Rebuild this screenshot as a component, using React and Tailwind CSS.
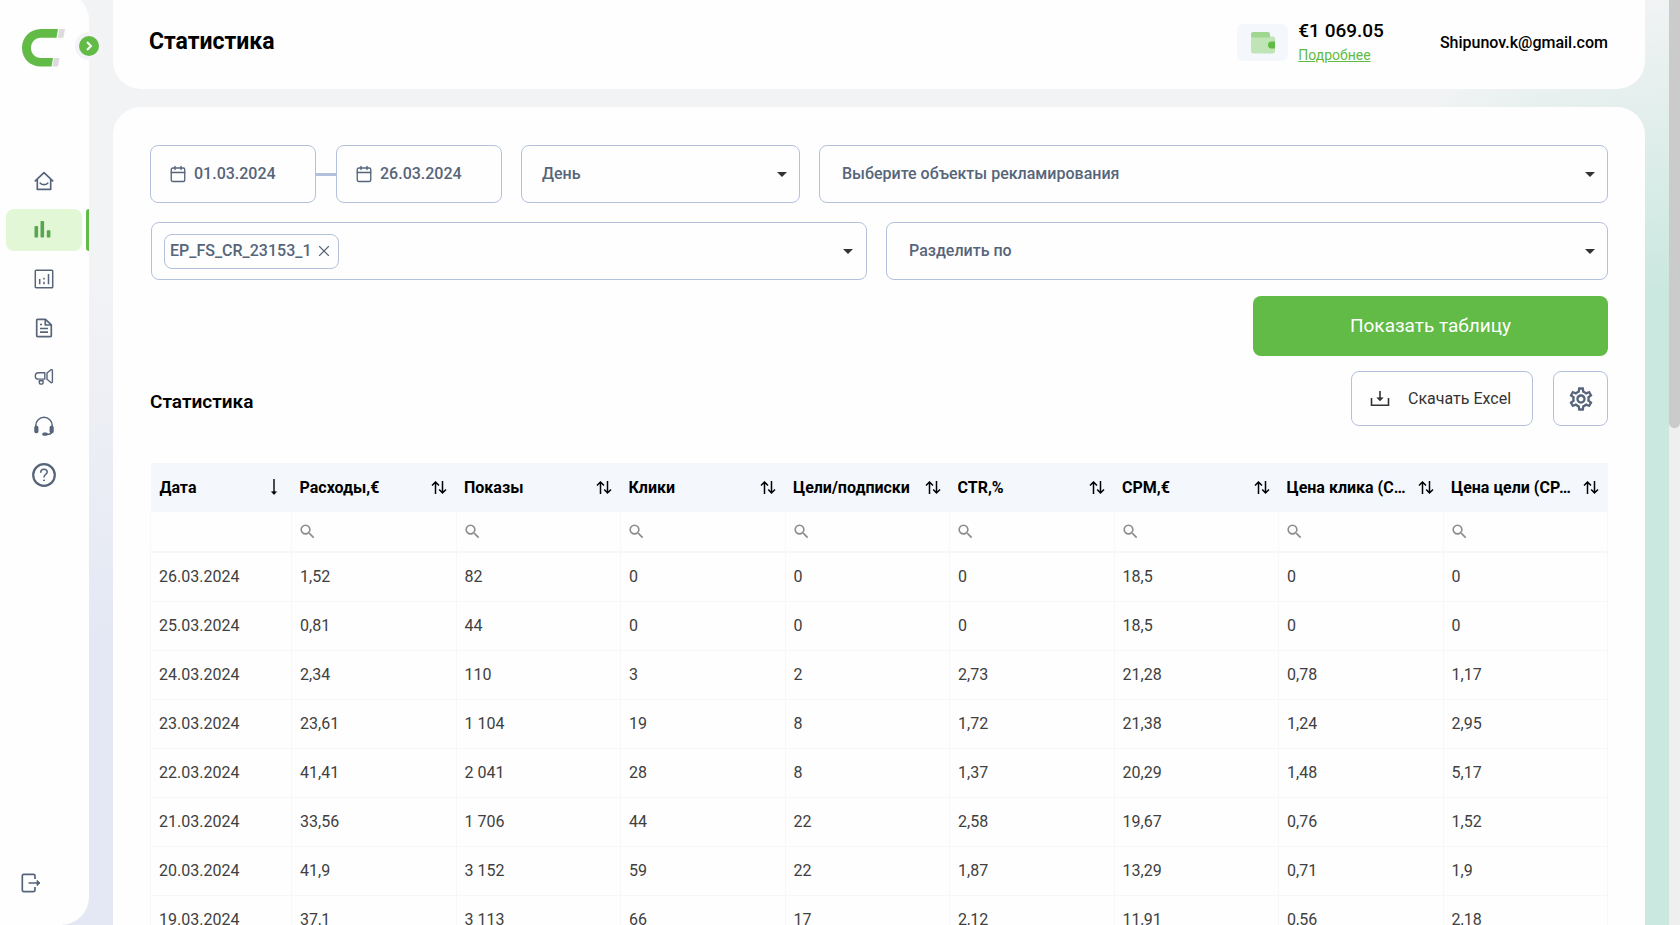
import React, { useState } from "react";
import { Calendar, X } from "lucide-react";
import { MdArrowDropDown, MdOutlineSettings, MdSearch } from "react-icons/md";

const columns = [
  "Расходы,€",
  "Показы",
  "Клики",
  "Цели/подписки",
  "CTR,%",
  "CPM,€",
  "Цена клика (CPC),€",
  "Цена цели (CPA),€",
];

const rows = [
  ["26.03.2024", "1,52", "82", "0", "0", "0", "18,5", "0", "0"],
  ["25.03.2024", "0,81", "44", "0", "0", "0", "18,5", "0", "0"],
  ["24.03.2024", "2,34", "110", "3", "2", "2,73", "21,28", "0,78", "1,17"],
  ["23.03.2024", "23,61", "1 104", "19", "8", "1,72", "21,38", "1,24", "2,95"],
  ["22.03.2024", "41,41", "2 041", "28", "8", "1,37", "20,29", "1,48", "5,17"],
  ["21.03.2024", "33,56", "1 706", "44", "22", "2,58", "19,67", "0,76", "1,52"],
  ["20.03.2024", "41,9", "3 152", "59", "22", "1,87", "13,29", "0,71", "1,9"],
  ["19.03.2024", "37,1", "3 113", "66", "17", "2,12", "11,91", "0,56", "2,18"],
];

const Logo = () => (
  <svg className="h-[38px] w-[44px]" viewBox="0 0 44 38">
    <path
      d="M36 0H19C8 0 0 8.5 0 19s8 18.500 19 18.500h10.500l1.500-8.500H19c-6 0-10-4.500-10-10s4-10.300 10-10.300h15.500z"
      fill="#61bb46"
    />
    <path d="M37.200 0H43l-1.600 8.700h-5.700zM31.800 29h5.700L36 37.500h-5.700z" fill="#dcdcdc" />
  </svg>
);

const HomeIcon = () => (
  <svg className="size-5" viewBox="0 0 20 20" fill="none" stroke="currentColor" strokeWidth="1.700" strokeLinejoin="round" strokeLinecap="round">
    <path d="M1.300 9.800 10 1.600l8.700 8.200M3.300 8.500v9.800h13.400V8.500M6.300 12.200c1.800 2 5.600 2 7.400 0" />
  </svg>
);

const BarsIcon = () => (
  <svg className="h-5 w-5" viewBox="0 0 20 20" fill="#5aa552">
    <rect x="0.500" y="6" width="3.600" height="11.500" rx="0.800" />
    <rect x="6.500" y="1" width="3.600" height="16.500" rx="0.800" />
    <rect x="12.800" y="10.200" width="3.600" height="7.300" rx="0.800" />
  </svg>
);

const ReportIcon = () => (
  <svg className="size-5" viewBox="0 0 20 20" fill="none" stroke="currentColor" strokeWidth="1.500">
    <rect x="1.300" y="1.300" width="17.400" height="17.400" rx="0.800" />
    <path d="M5.700 10V15.300M10 8.700v1.800M10 12.700V15.300M14.500 5v10.300" />
  </svg>
);

const DocumentIcon = () => (
  <svg className="size-5" viewBox="0 0 20 20" fill="none" stroke="currentColor" strokeWidth="1.700" strokeLinejoin="round">
    <path d="M11.500 1.300H3.600c-.5 0-.9.400-.9.900v15.600c0 .5.400.9.900.9h12.800c.5 0 .9-.4.900-.9V6.800z" />
    <path d="M11.300 1.500v5.500h5.700M6 6.500h2M6 10.500h8M6 14.200h8" />
  </svg>
);

const MegaphoneIcon = () => (
  <svg className="size-5" viewBox="0 0 20 20" fill="none" stroke="currentColor" strokeWidth="1.400" strokeLinejoin="round">
    <path d="M4.500 5.700h6.300v6.400H4.500a3.200 3.200 0 0 1 0-6.400zM13 6l3.900-3.200c.6-.4 1.500-.1 1.500.6v11.600c0 .7-.9 1-1.500.5L13 12.200zM5.300 13.800h3.800v1.400c0 1.100-.8 1.900-1.900 1.900s-1.900-.8-1.900-1.900z" />
  </svg>
);

const HeadsetIcon = () => (
  <svg className="size-5" viewBox="0 0 20 20" fill="none" stroke="currentColor" strokeWidth="1.500">
    <path d="M1.800 12V9.500a8.200 8.200 0 0 1 16.400 0V14c0 2.800-1.500 4.200-4 4.200h-2" />
    <rect x="1" y="10.500" width="2.700" height="6" rx="1" fill="currentColor" />
    <rect x="16.300" y="10.500" width="2.700" height="6" rx="1" fill="currentColor" />
    <rect x="9" y="17.300" width="4" height="1.700" rx="0.800" fill="currentColor" />
  </svg>
);

const HelpIcon = () => (
  <svg className="size-6" viewBox="0 0 24 24" fill="none" stroke="currentColor" strokeLinecap="round">
    <circle cx="12" cy="12" r="10.800" strokeWidth="2.200" />
    <path d="M8.800 9.300c0-1.800 1.400-3 3.200-3s3.200 1.100 3.200 2.800c0 2.200-3.200 2.400-3.200 5" strokeWidth="1.500" />
    <circle cx="12" cy="17.300" r="0.500" fill="currentColor" />
  </svg>
);

const LogoutIcon = () => (
  <svg className="size-5" viewBox="0 0 20 20" fill="none" stroke="currentColor" strokeWidth="1.700" strokeLinejoin="round">
    <path d="M14 6V2.700c0-.8-.5-1.300-1.300-1.300H2.600c-.8 0-1.300.5-1.300 1.300v14.600c0 .8.500 1.300 1.300 1.300h10.100c.8 0 1.300-.5 1.300-1.300V14M7.500 10h11" />
    <path d="M16 7.300 19 10l-3 2.700z" fill="currentColor" strokeWidth="0.800" />
  </svg>
);

const WalletIcon = () => (
  <svg className="h-[22px] w-6" viewBox="0 0 24 22">
    <path d="M0 4.500h22a2 2 0 0 1 2 2V19a2.500 2.500 0 0 1-2.500 2.500h-19A2.500 2.500 0 0 1 0 19z" fill="#bfe4b5" />
    <path d="M2 0h15a2 2 0 0 1 2 2v3.500H2A2 2 0 0 1 0 3.500V2a2 2 0 0 1 2-2z" fill="#a0d690" />
    <path d="M20.500 9.500H24v7h-3.500a3.500 3.500 0 0 1 0-7z" fill="#61bb46" />
  </svg>
);

const DownloadIcon = () => (
  <svg className="h-4 w-5" viewBox="0 0 20 16" fill="none" stroke="currentColor" strokeWidth="1.600">
    <path d="M1.500 7v7.200h17V7M10 0v8" />
    <path d="M6.800 6.700h6.400L10 10z" fill="currentColor" strokeWidth="0.500" />
  </svg>
);

const SortIcon = () => (
  <svg className="h-[14px] w-4 shrink-0" viewBox="0 0 16 14" fill="none" stroke="currentColor" strokeWidth="1.500">
    <path d="M4.500 13V1M1 4.500l3.500-3.500L8 4.500M11.500 0v12M8.200 8.500l3.300 3.500L15 8.500" />
  </svg>
);

const SortedIcon = () => (
  <svg className="h-[18px] w-2 shrink-0" viewBox="0 0 8 18" fill="none" stroke="currentColor" strokeWidth="1.400">
    <path d="M4 0v15" />
    <path d="M1.500 12.700 4 15.500l2.500-2.800z" fill="currentColor" strokeWidth="0.600" />
  </svg>
);

const navItems = [
  { label: "Главная", icon: HomeIcon },
  { label: "Статистика", icon: BarsIcon, active: true },
  { label: "Отчёты", icon: ReportIcon },
  { label: "Документы", icon: DocumentIcon },
  { label: "Реклама", icon: MegaphoneIcon },
  { label: "Поддержка", icon: HeadsetIcon },
  { label: "Помощь", icon: HelpIcon },
];

const Sidebar = () => (
  <aside className="relative -mt-2 flex w-[89px] shrink-0 flex-col rounded-r-[28px] bg-[#fefefe] text-[#56657a]">
    <a href="#" aria-label="На главную" className="mt-[37px] ml-[22px] self-start">
      <Logo />
    </a>
    <button
      aria-label="Развернуть меню"
      className="absolute top-10 -right-[14px] flex size-7 items-center justify-center rounded-full bg-[#f3f3f8]"
    >
      <span className="flex size-5 items-center justify-center rounded-full bg-[#61bb46]">
        <svg className="size-3" viewBox="0 0 12 12" fill="none" stroke="white" strokeWidth="2">
          <path d="m4 2 4 4-4 4" />
        </svg>
      </span>
    </button>
    <nav className="mt-[93px] flex flex-col gap-[7px]">
      {navItems.map(({ label, icon: Icon, active }) => (
        <a
          key={label}
          href="#"
          aria-label={label}
          className="flex h-[42px] items-stretch justify-between pl-[6px]"
        >
          <span
            className={
              active
                ? "flex w-[76px] items-center justify-center rounded-lg bg-[#e1f7d6]"
                : "flex w-[76px] items-center justify-center"
            }
          >
            <Icon />
          </span>
          {active && <span className="w-[3px] rounded-l-sm bg-[#61bb46]" />}
        </a>
      ))}
    </nav>
    <button aria-label="Выйти" className="mt-auto mb-8 ml-[21px] self-start">
      <LogoutIcon />
    </button>
  </aside>
);

const Header = () => (
  <header className="flex h-[89px] shrink-0 items-center justify-between rounded-b-[28px] bg-[#fefefe] pr-[37px] pb-1 pl-9">
    <h1 className="text-[23px] font-bold text-black">Статистика</h1>
    <div className="flex items-center">
      <div className="flex h-[37px] w-[51px] items-center justify-center rounded-md bg-[#f4f8fd]">
        <WalletIcon />
      </div>
      <div className="ml-[10px] flex flex-col">
        <span className="text-[19px] leading-6 font-medium text-black">€1 069.05</span>
        <a href="#" className="text-sm leading-6 text-[#61bb46] underline">
          Подробнее
        </a>
      </div>
      <span className="ml-14 text-base font-medium text-black">Shipunov.k@gmail.com</span>
    </div>
  </header>
);

const DateField = ({ label, value, onChange }) => (
  <label className="flex h-[58px] w-[166px] shrink-0 items-center gap-[7px] rounded-lg border border-[#b4c1dc] pl-[18px] text-[#56657a]">
    <Calendar className="size-[18px] shrink-0" strokeWidth={1.8} />
    <input
      type="text"
      aria-label={label}
      value={value}
      onChange={(e) => onChange(e.target.value)}
      className="w-full min-w-0 text-base font-medium outline-none"
    />
  </label>
);

const SelectField = ({ label, options, className, padding }) => (
  <div className={`relative ${className}`}>
    <select
      aria-label={label}
      className={`h-[58px] w-full appearance-none rounded-lg border border-[#b4c1dc] bg-transparent text-base font-medium text-[#56657a] outline-none ${padding}`}
    >
      {options.map((option) => (
        <option key={option}>{option}</option>
      ))}
    </select>
    <MdArrowDropDown className="pointer-events-none absolute top-[17px] right-[6px] size-6 text-[#333]" />
  </div>
);

const Filters = () => {
  const [from, setFrom] = useState("01.03.2024");
  const [to, setTo] = useState("26.03.2024");
  const [tags, setTags] = useState(["EP_FS_CR_23153_1"]);

  return (
    <form className="flex flex-col" onSubmit={(e) => e.preventDefault()}>
      <div className="flex items-center">
        <DateField label="Дата начала" value={from} onChange={setFrom} />
        <span className="h-[3px] w-5 shrink-0 bg-[#b4c1dc]" />
        <DateField label="Дата окончания" value={to} onChange={setTo} />
        <SelectField
          label="Период"
          options={["День", "Неделя", "Месяц"]}
          className="ml-[19px] w-[279px] shrink-0"
          padding="pl-5"
        />
        <SelectField
          label="Объекты рекламирования"
          options={["Выберите объекты рекламирования"]}
          className="ml-[19px] min-w-0 flex-1"
          padding="pl-[22px]"
        />
      </div>

      <div className="mt-[19px] flex gap-[19px] pl-px">
        <div className="flex h-[58px] min-w-0 flex-1 items-center rounded-lg border border-[#b4c1dc] pr-[6px] pl-3">
          {tags.map((tag) => (
            <span
              key={tag}
              className="flex h-[35px] items-center gap-1 rounded-lg border border-[#b4c1dc] pr-[5px] pl-[5px] text-base font-medium text-[#56657a]"
            >
              {tag}
              <button
                type="button"
                aria-label={`Удалить ${tag}`}
                onClick={() => setTags(tags.filter((t) => t !== tag))}
              >
                <X className="size-[18px]" strokeWidth={1.5} />
              </button>
            </span>
          ))}
          <button type="button" aria-label="Открыть список" className="ml-auto">
            <MdArrowDropDown className="size-6 text-[#333]" />
          </button>
        </div>
        <SelectField
          label="Разделить по"
          options={["Разделить по"]}
          className="w-[722px] shrink-0"
          padding="pl-[22px]"
        />
      </div>

      <button
        type="submit"
        className="mt-4 h-[60px] w-[355px] self-end rounded-lg bg-[#61bb46] text-[19px] text-white"
      >
        Показать таблицу
      </button>
    </form>
  );
};

const StatsTable = () => (
  <table className="mt-[37px] w-full table-fixed border-collapse text-left text-base">
    <colgroup>
      <col className="w-[141px]" />
      {columns.map((name) => (
        <col key={name} />
      ))}
    </colgroup>
    <thead>
      <tr className="h-[49px] bg-[#f4f8fd] text-black">
        <th scope="col" className="pr-[14px] pl-[9px] font-bold">
          <div className="flex items-center justify-between">
            <span>Дата</span>
            <SortedIcon />
          </div>
        </th>
        {columns.map((name) => (
          <th key={name} scope="col" className="pr-[9px] pl-2 font-bold">
            <div className="flex items-center justify-between gap-2">
              <span className="truncate">{name}</span>
              <SortIcon />
            </div>
          </th>
        ))}
      </tr>
      <tr className="h-10 border-b-2 border-[#f7f7f7]">
        <td className="border-x border-[#f8f8f8]" />
        {columns.map((name) => (
          <td key={name} className="border-x border-[#f8f8f8] px-[6px]">
            <label className="flex items-center">
              <MdSearch className="size-[19px] shrink-0 text-[#8c8c8c]" />
              <input type="text" aria-label={`Поиск: ${name}`} className="w-full min-w-0 outline-none" />
            </label>
          </td>
        ))}
      </tr>
    </thead>
    <tbody>
      {rows.map((row) => (
        <tr key={row[0]} className="h-[49px] text-[#404040]">
          {row.map((value, i) => (
            <td key={i} className="border border-[#f7f7f7] px-2">
              {value}
            </td>
          ))}
        </tr>
      ))}
    </tbody>
  </table>
);

const App = () => (
  <div className="flex h-screen overflow-hidden bg-[#f2f3f5] font-[Roboto,sans-serif]">
    <div className="flex min-w-0 flex-1 bg-[radial-gradient(450px_700px_at_100%_75%,#cbe8e0_58%,transparent_100%),linear-gradient(to_bottom,#f2f3f5_30%,#e4e8f4_70%)]">
      <Sidebar />
      <div className="mr-6 ml-6 flex min-w-0 flex-1 flex-col gap-[18px]">
        <Header />
        <main className="flex-1 rounded-t-[28px] bg-[#fefefe] pt-[38px] pr-[37px] pl-[37px]">
          <Filters />
          <section>
            <div className="mt-[15px] flex items-center">
              <h2 className="mt-2 mr-auto text-[19px] font-semibold text-black">Статистика</h2>
              <button className="mr-5 flex h-[55px] w-[182px] items-center rounded-lg border border-[#b4c1dc] pl-[18px] text-base text-[#333]">
                <DownloadIcon />
                <span className="ml-[18px]">Скачать Excel</span>
              </button>
              <button
                aria-label="Настройки"
                className="flex size-[55px] items-center justify-center rounded-lg border border-[#b4c1dc] text-[#56657a]"
              >
                <MdOutlineSettings className="size-7" />
              </button>
            </div>
            <StatsTable />
          </section>
        </main>
      </div>
    </div>
    <div aria-hidden="true" className="w-[11px] shrink-0 bg-[#efefef]">
      <div className="h-[428px] rounded-b-md bg-[#cbcbcb]" />
    </div>
  </div>
);

export default App;
